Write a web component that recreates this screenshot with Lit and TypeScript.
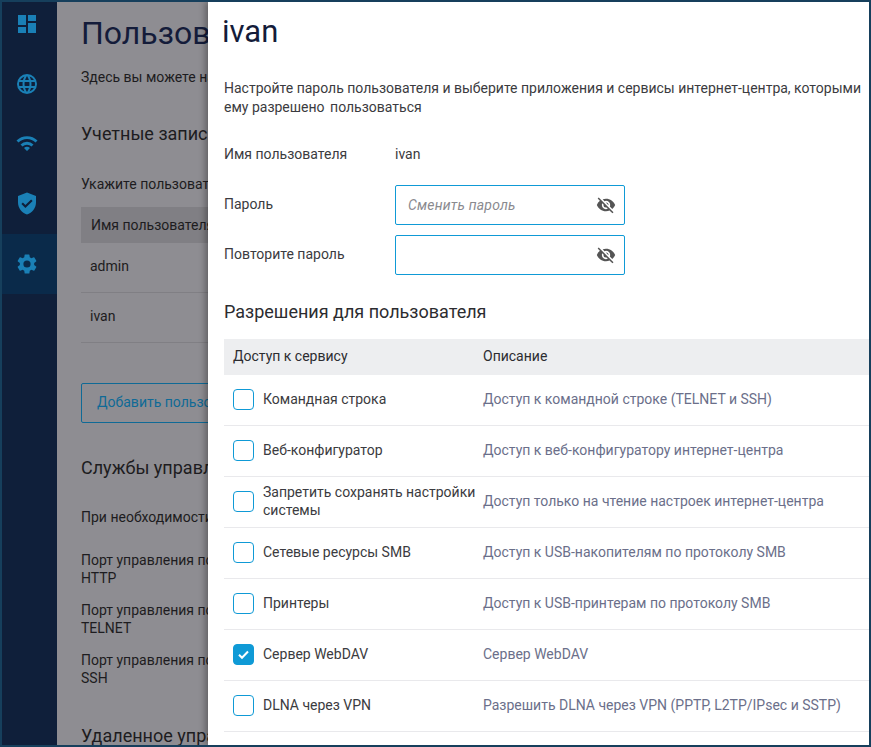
import { LitElement, html, css, svg } from "lit";
import { customElement } from "lit/decorators.js";

const rows: [string, string, boolean][] = [
  ["Командная строка", "Доступ к командной строке (TELNET и SSH)", false],
  ["Веб-конфигуратор", "Доступ к веб-конфигуратору интернет-центра", false],
  ["Запретить сохранять настройки системы", "Доступ только на чтение настроек интернет-центра", false],
  ["Сетевые ресурсы SMB", "Доступ к USB-накопителям по протоколу SMB", false],
  ["Принтеры", "Доступ к USB-принтерам по протоколу SMB", false],
  ["Сервер WebDAV", "Сервер WebDAV", true],
  ["DLNA через VPN", "Разрешить DLNA через VPN (PPTP, L2TP/IPsec и SSTP)", false],
];

const navIcons = [
  svg`<path d="M3 13h8V3H3v10zm0 8h8v-6H3v6zm10 0h8V11h-8v10zm0-18v6h8V3h-8z"/>`,
  svg`<path fill-rule="evenodd" d="M12 2a10 10 0 1 0 0 20 10 10 0 0 0 0-20zm6.9 6h-2.95a15.6 15.6 0 0 0-1.38-3.56A8 8 0 0 1 18.92 8zM12 4.04c.83 1.2 1.48 2.53 1.91 3.96h-3.82c.43-1.43 1.08-2.76 1.91-3.96zM4.26 14a8.2 8.2 0 0 1 0-4h3.38a16.5 16.5 0 0 0 0 4H4.26zm.82 2h2.95c.32 1.25.78 2.45 1.38 3.56A8 8 0 0 1 5.08 16zm2.95-8H5.08a8 8 0 0 1 4.33-3.56A15.6 15.6 0 0 0 8.03 8zM12 19.96A14 14 0 0 1 10.09 16h3.82A14 14 0 0 1 12 19.96zM14.34 14H9.66a14.7 14.7 0 0 1 0-4h4.68a14.7 14.7 0 0 1 0 4zm.25 5.56c.6-1.11 1.06-2.31 1.38-3.56h2.95a8 8 0 0 1-4.33 3.56zM16.36 14a16.5 16.5 0 0 0 0-4h3.38a8.2 8.2 0 0 1 0 4h-3.38z"/>`,
  svg`<path d="M1.5 8.5l2 2a12 12 0 0 1 17 0l2-2a15 15 0 0 0-21 0zM5.5 12.5l2 2a6.4 6.4 0 0 1 9 0l2-2a9.2 9.2 0 0 0-13 0zM9 16l3 3 3-3a4.2 4.2 0 0 0-6 0z"/>`,
  svg`<path fill-rule="evenodd" d="M12 .5L3 4v6.6c0 5.5 3.8 10.3 9 11.9 5.2-1.6 9-6.4 9-11.9V4L12 .5zm-1.6 15.6l-4-4 1.5-1.5 2.5 2.5 5.7-5.7 1.5 1.5-7.2 7.2z"/>`,
  svg`<path d="M19.14 12.94a7.1 7.1 0 0 0 0-1.88l2.03-1.58a.5.5 0 0 0 .12-.61l-1.92-3.32a.5.5 0 0 0-.59-.22l-2.39.96a7 7 0 0 0-1.62-.94l-.36-2.54a.5.5 0 0 0-.48-.41h-3.84a.5.5 0 0 0-.47.41l-.36 2.54c-.59.24-1.13.57-1.62.94l-2.39-.96a.5.5 0 0 0-.59.22L2.74 8.87a.5.5 0 0 0 .12.61l2.03 1.58a7.3 7.3 0 0 0 0 1.88l-2.03 1.58a.5.5 0 0 0-.12.61l1.92 3.32c.12.22.37.29.59.22l2.39-.96c.5.38 1.03.7 1.62.94l.36 2.54c.05.24.24.41.48.41h3.84c.24 0 .44-.17.47-.41l.36-2.54a7 7 0 0 0 1.62-.94l2.39.96c.22.08.47 0 .59-.22l1.92-3.32a.5.5 0 0 0-.12-.61l-2.01-1.58zM12 15.6a3.6 3.6 0 1 1 0-7.2 3.6 3.6 0 0 1 0 7.2z"/>`,
];

const eyeOff = html`<svg class="eye" viewBox="0 0 24 24" aria-hidden="true"><path d="M12 7a5 5 0 0 1 5 5c0 .65-.13 1.26-.36 1.83l2.92 2.92A11.8 11.8 0 0 0 23 12c-1.73-4.39-6-7.5-11-7.5-1.4 0-2.74.25-3.98.7l2.16 2.16A4.9 4.9 0 0 1 12 7zM2 4.27l2.28 2.28.46.46A11.8 11.8 0 0 0 1 12c1.73 4.39 6 7.5 11 7.5 1.55 0 3.03-.3 4.38-.84l.42.42L19.73 22 21 20.73 3.27 3 2 4.27zM7.53 9.8l1.55 1.55A2.8 2.8 0 0 0 9 12a3 3 0 0 0 3 3c.22 0 .44-.03.65-.08l1.55 1.55A5 5 0 0 1 7 12c0-.79.2-1.53.53-2.2zm4.31-.78l3.15 3.15.02-.17a3 3 0 0 0-3-3l-.17.02z"/></svg>`;

@customElement("app-root")
export class AppRoot extends LitElement {
  static styles = css`
    :host {
      display: block;
      height: 747px;
      font-family: Roboto, "Noto Sans", sans-serif;
      font-size: 14px;
      color: #3b3b40;
    }
    .frame {
      box-sizing: border-box;
      height: 747px;
      border: 2px solid #163f5c;
      display: flex;
      overflow: hidden;
    }
    .nav {
      width: 55px;
      flex: none;
      background: #0f1f3a;
      display: flex;
      flex-direction: column;
    }
    .nav-item {
      box-sizing: border-box;
      height: 60px;
      padding-right: 6px;
      display: flex;
      align-items: center;
      justify-content: center;
      color: #1a80b6;
    }
    .nav-item svg {
      width: 24px;
      height: 24px;
      fill: currentColor;
    }
    .nav-item.top {
      height: 52px;
      padding-bottom: 8px;
    }
    .nav-item.active {
      background: #0a2a4a;
    }
    .page {
      flex: 1;
      position: relative;
      overflow: hidden;
      background: #8e8d92;
    }
    .under {
      box-sizing: border-box;
      width: 151px;
      padding: 0 0 0 24px;
      overflow: hidden;
      white-space: nowrap;
      color: #1d1c20;
    }
    .under h1 {
      margin: 0;
      padding-top: 11px;
      font-size: 32px;
      line-height: 40px;
      font-weight: 400;
      color: #141c3a;
    }
    .under h2 {
      margin: 0;
      font-size: 18px;
      line-height: 24px;
      font-weight: 400;
    }
    .under p {
      margin: 0;
      line-height: 18px;
    }
    .under .intro { margin-top: 15px; }
    .under .h-acc { margin-top: 36px; }
    .under .hint { margin-top: 29px; }
    .uhead {
      margin: 14px -10px 0 0;
      height: 36px;
      line-height: 36px;
      background: #807f84;
      padding-left: 10px;
    }
    .urow {
      margin-right: -10px;
      height: 49px;
      line-height: 47px;
      padding-left: 9px;
      border-bottom: 1px solid #807f84;
    }
    .add {
      margin: 40px -10px 0 0;
      box-sizing: border-box;
      height: 40px;
      line-height: 36px;
      border: 1px solid #0f6a96;
      border-radius: 2px;
      padding-left: 15px;
      color: #0f6a96;
    }
    .under .h-srv { margin-top: 33px; }
    .under .need { margin-top: 28px; }
    .under .port { margin-top: 14px; }
    .under .port.first { margin-top: 25px; }
    .under .h-rem { margin-top: 37px; }

    .panel {
      position: absolute;
      top: 0;
      left: 151px;
      right: 0;
      bottom: 0;
      background: #fff;
      box-shadow: -3px 0 6px rgba(0, 0, 0, 0.3);
      padding: 0 0 0 16px;
      overflow: hidden;
    }
    .panel h1 {
      margin: 0 0 0 -2px;
      padding-top: 10px;
      font-size: 31px;
      line-height: 40px;
      font-weight: 400;
      color: #141c3a;
    }
    .desc {
      margin: 27px 0 0;
      line-height: 19px;
      font-size: 14px;
      color: #3b3b40;
    }
    .desc .wide {
      margin-left: 2px;
    }
    .form {
      margin-top: 22px;
      display: grid;
      grid-template-columns: 171px 230px;
      grid-template-rows: 36px 40px 40px;
      row-gap: 10px;
      align-items: center;
    }
    .form .first {
      align-self: start;
      line-height: 30px;
    }
    .form .lbl {
      padding-bottom: 2px;
    }
    .value { color: #3b3b40; }
    .field {
      box-sizing: border-box;
      height: 40px;
      border: 1px solid #0f9ad6;
      border-radius: 2px;
      display: flex;
      align-items: center;
      justify-content: space-between;
      padding: 0 8px 0 12px;
      font-style: italic;
      letter-spacing: 0.2px;
      color: #8a8a8f;
    }
    .eye {
      width: 20px;
      height: 20px;
      fill: #555;
    }
    .panel h2 {
      margin: 25px 0 0;
      font-size: 18px;
      line-height: 24px;
      font-weight: 400;
      color: #2c2c30;
    }
    .table { margin-top: 15px; }
    .thead, .row {
      display: grid;
      grid-template-columns: 250px 1fr;
      padding-left: 9px;
      align-items: center;
    }
    .thead {
      box-sizing: border-box;
      height: 36px;
      padding-bottom: 2px;
      background: #edeef0;
      color: #2c2c30;
    }
    .row {
      height: 51px;
      box-sizing: border-box;
      padding-bottom: 2px;
      border-bottom: 1px solid #e9e9ec;
    }
    .svc {
      display: flex;
      align-items: center;
      gap: 9px;
      line-height: 18px;
    }
    .box {
      box-sizing: border-box;
      width: 21px;
      height: 21px;
      flex: none;
      border: 1px solid #0f9ad6;
      border-radius: 4px;
      display: flex;
      align-items: center;
      justify-content: center;
    }
    .box.on { background: #0f9ad6; }
    .box svg { width: 13px; height: 13px; }
    .info { color: #6b6f8a; }
  `;

  render() {
    return html`<div class="frame">
      <nav class="nav">
        ${navIcons.map(
          (ic, i) => html`<div class="nav-item ${i === 0 ? "top" : ""} ${i === 4 ? "active" : ""}">
            <svg viewBox="0 0 24 24">${ic}</svg>
          </div>`
        )}
      </nav>
      <main class="page">
        <div class="under">
          <h1>Пользователи и доступ</h1>
          <p class="intro">Здесь вы можете настроить учетные записи пользователей</p>
          <h2 class="h-acc">Учетные записи пользователей</h2>
          <p class="hint">Укажите пользователей и их права</p>
          <div class="uhead">Имя пользователя</div>
          <div class="urow">admin</div>
          <div class="urow">ivan</div>
          <div class="add">Добавить пользователя</div>
          <h2 class="h-srv">Службы управления</h2>
          <p class="need">При необходимости измените порты</p>
          <p class="port first">Порт управления по протоколу<br />HTTP</p>
          <p class="port">Порт управления по протоколу<br />TELNET</p>
          <p class="port">Порт управления по протоколу<br />SSH</p>
          <h2 class="h-rem">Удаленное управление</h2>
        </div>
        <section class="panel">
          <h1>ivan</h1>
          <p class="desc">
            Настройте пароль пользователя и выберите приложения и сервисы интернет-центра, которыми<br />ему разрешено
            <span class="wide">пользоваться</span>
          </p>
          <div class="form">
            <span class="first">Имя пользователя</span><span class="value first">ivan</span>
            <span class="lbl">Пароль</span>
            <div class="field"><span>Сменить пароль</span>${eyeOff}</div>
            <span class="lbl">Повторите пароль</span>
            <div class="field"><span></span>${eyeOff}</div>
          </div>
          <h2>Разрешения для пользователя</h2>
          <div class="table">
            <div class="thead"><span>Доступ к сервису</span><span>Описание</span></div>
            ${rows.map(
              ([name, info, on]) => html`<div class="row">
                <div class="svc">
                  <span class="box ${on ? "on" : ""}">
                    ${on
                      ? html`<svg viewBox="0 0 13 13"><path d="M2 6.8l3 3 6-6.3" fill="none" stroke="#fff" stroke-width="2"/></svg>`
                      : ""}
                  </span>
                  <span>${name}</span>
                </div>
                <span class="info">${info}</span>
              </div>`
            )}
          </div>
        </section>
      </main>
    </div>`;
  }
}
